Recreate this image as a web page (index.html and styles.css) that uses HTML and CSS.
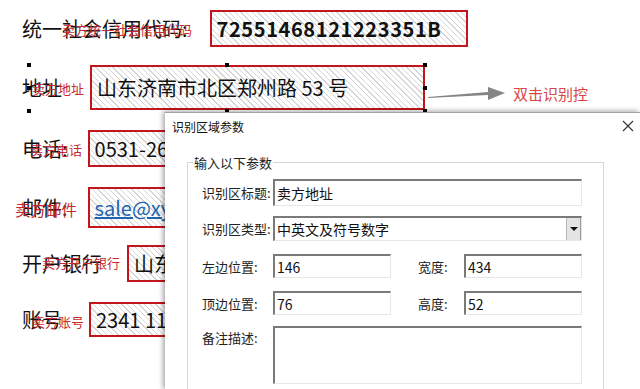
FILE: index.html
```html
<!DOCTYPE html>
<html lang="zh-CN">
<head>
    <meta charset="UTF-8">
    <meta name="viewport" content="width=device-width, initial-scale=1.0">
    <title>识别区域参数</title>
    <link rel="stylesheet" href="styles.css">
</head>
<body>
    <div class="sheet">
        <div class="row row-credit">
            <div class="field-name">统一社会信用代码:<span class="tag tag-credit">卖方统一社会信用代码</span></div>
            <div class="zone zone-credit"><span class="code">72551468121223351B</span></div>
        </div>
        <div class="row row-address">
            <div class="field-name">地址<span class="tag tag-address">卖方地址</span></div>
            <div class="zone zone-address">山东济南市北区郑州路 53 号</div>
        </div>
        <div class="row row-phone">
            <div class="field-name">电话:<span class="tag tag-phone">卖方电话</span></div>
            <div class="zone zone-phone">0531-26887654</div>
        </div>
        <div class="row row-mail">
            <div class="field-name">邮件:<span class="tag tag-mail">卖方邮件</span></div>
            <div class="zone zone-mail"><span class="mail-link">sale@xyz.com</span></div>
        </div>
        <div class="row row-bank">
            <div class="field-name">开户银行<span class="tag tag-bank">卖方开户银行</span></div>
            <div class="zone zone-bank">山东银行济南分行</div>
        </div>
        <div class="row row-account">
            <div class="field-name">账号<span class="tag tag-account">卖方账号</span></div>
            <div class="zone zone-account">2341 1122 3344</div>
        </div>
    </div>

    <!-- 选中框的控制点 -->
    <div class="selection">
        <span class="handle h-tl"></span>
        <span class="handle h-tm"></span>
        <span class="handle h-tr"></span>
        <span class="handle h-ml"></span>
        <span class="handle h-mr"></span>
        <span class="handle h-bl"></span>
        <span class="handle h-bm"></span>
        <span class="handle h-br"></span>
    </div>

    <div class="hint">
        <svg width="80" height="18" viewBox="0 0 80 18">
            <polygon points="0,12 60,7 60,2 77,8 60,15 60,10 0,13" fill="#858585"/>
        </svg>
        <span class="hint-text">双击识别控</span>
    </div>

    <div class="dialog">
        <div class="dialog-title">
            <span>识别区域参数</span>
            <svg class="close" width="12" height="12" viewBox="0 0 12 12">
                <path d="M1 1 L11 11 M11 1 L1 11" stroke="#333" stroke-width="1.1" fill="none"/>
            </svg>
        </div>
        <div class="dialog-body">
            <fieldset class="group">
                <legend>输入以下参数</legend>
                <div class="param-row row-title">
                    <label class="param-label">识别区标题:</label>
                    <input class="param-input input-wide" type="text" value="卖方地址" readonly>
                </div>
                <div class="param-row row-type">
                    <label class="param-label">识别区类型:</label>
                    <div class="combo">
                        <span class="combo-text">中英文及符号数字</span>
                        <span class="combo-btn"><span class="arrow-down"></span></span>
                    </div>
                </div>
                <div class="param-row row-pos">
                    <label class="param-label">左边位置:</label>
                    <input class="param-input input-half" type="text" value="146" readonly>
                    <label class="param-label label-short">宽度:</label>
                    <input class="param-input input-half" type="text" value="434" readonly>
                </div>
                <div class="param-row row-pos">
                    <label class="param-label">顶边位置:</label>
                    <input class="param-input input-half" type="text" value="76" readonly>
                    <label class="param-label label-short">高度:</label>
                    <input class="param-input input-half" type="text" value="52" readonly>
                </div>
                <div class="param-row row-note">
                    <label class="param-label">备注描述:</label>
                    <textarea class="param-input note" readonly></textarea>
                </div>
            </fieldset>
        </div>
    </div>
</body>
</html>
```

FILE: styles.css
```css
html {
    overflow: hidden;
}

body {
    margin: 0;
    width: 640px;
    height: 389px;
    overflow: hidden;
    position: relative;
    background-color: #fff;
    font-family: "Noto Sans CJK SC", "Liberation Sans", sans-serif;
    color: #111;
}

.sheet {
    display: flex;
    flex-direction: column;
    padding: 10px 0 0 22px;
}

.row {
    display: flex;
    align-items: center;
}

.row-address { margin-top: 18px; }
.row-phone { margin-top: 20px; }
.row-mail { margin-top: 20px; }
.row-bank { margin-top: 17px; }
.row-account { margin-top: 20px; }

.field-name {
    position: relative;
    font-size: 20px;
    line-height: 1;
    white-space: nowrap;
}

.tag {
    position: absolute;
    top: 50%;
    transform: translateY(-50%);
    font-size: 13px;
    color: #c62a2f;
    white-space: nowrap;
}

.tag-credit { left: 40px; }
.tag-address { left: 10px; }
.tag-phone { left: 8px; top: 50%; }
.tag-mail { left: -7px; top: 60%; font-size: 15.5px; }
.tag-bank { left: 20px; top: 42%; }
.tag-account { left: 10px; top: 57%; }

.zone {
    display: flex;
    align-items: center;
    box-sizing: border-box;
    padding-left: 5px;
    border: 2px solid #c3151c;
    background: repeating-linear-gradient(45deg, #fff 0, #fff 3px, #d6d6d6 3px, #d6d6d6 4px);
    font-size: 20px;
    white-space: nowrap;
    overflow: hidden;
}

.zone-credit { margin-left: 22px; width: 258px; height: 37px; }
.zone-address { margin-left: 28px; width: 335px; height: 45px; }
.zone-phone { margin-left: 20px; width: 300px; height: 37px; }
.zone-mail { margin-left: 20px; width: 300px; height: 41px; }
.zone-bank { margin-left: 25px; width: 300px; height: 37px; }
.zone-account { margin-left: 27px; width: 300px; height: 35px; }

.code {
    font-weight: bold;
    letter-spacing: 0.6px;
}

.mail-link {
    color: #1f64b0;
    text-decoration: underline;
}

.selection {
    position: absolute;
    left: 29px;
    top: 65px;
    width: 396px;
    height: 46px;
}

.handle {
    position: absolute;
    width: 4px;
    height: 4px;
    background-color: #000;
    margin: -2px 0 0 -2px;
}

.h-tl { left: 0; top: 0; }
.h-tm { left: 50%; top: 0; }
.h-tr { left: 100%; top: 0; }
.h-ml { left: 0; top: 50%; }
.h-mr { left: 100%; top: 50%; }
.h-bl { left: 0; top: 100%; }
.h-bm { left: 50%; top: 100%; }
.h-br { left: 100%; top: 100%; }

.hint {
    position: absolute;
    left: 428px;
    top: 83px;
    display: flex;
    align-items: center;
    gap: 5px;
}

.hint-text {
    font-size: 15px;
    color: #d64545;
}

.dialog {
    position: absolute;
    left: 165px;
    top: 112px;
    width: 475px;
    height: 277px;
    overflow: hidden;
    background-color: #fff;
    border-top: 1px solid #a3a3a3;
    box-shadow: -2px -1px 5px rgba(0, 0, 0, 0.35);
}

.dialog-title {
    display: flex;
    justify-content: space-between;
    align-items: center;
    height: 26px;
    padding: 0 6px 0 7px;
    font-size: 12px;
    color: #111;
}

.dialog-body {
    padding: 14px 36px 0 22px;
}

.group {
    margin: 0;
    padding: 0 21px 20px 14px;
    border: 1px solid #d6d6d6;
    height: 260px;
}

.group legend {
    font-size: 13px;
    padding: 0 1px;
    margin-left: -9px;
    color: #222;
}

.param-row {
    display: flex;
    align-items: center;
}

.row-title { margin-top: 7px; }
.row-type { margin-top: 10px; }
.row-pos { margin-top: 13px; }
.row-note { margin-top: 11px; align-items: flex-start; }

.param-label {
    width: 71px;
    font-size: 13px;
    color: #222;
    white-space: nowrap;
}

.label-short {
    width: 46px;
    margin-left: 27px;
}

.row-note .param-label {
    margin-top: 2px;
}

.param-input {
    box-sizing: border-box;
    margin: 0;
    padding: 0 2px;
    border-style: solid;
    border-width: 2px 1px 1px 2px;
    border-color: #7a7a7a #e6e6e6 #e6e6e6 #7a7a7a;
    font-family: "Noto Sans CJK SC", "Liberation Sans", sans-serif;
    font-size: 14px;
    color: #111;
    background-color: #fff;
    outline: none;
}

.input-wide {
    width: 309px;
    height: 27px;
}

.input-half {
    width: 118px;
    height: 24px;
}

.note {
    width: 309px;
    height: 58px;
    resize: none;
}

.combo {
    box-sizing: border-box;
    display: flex;
    align-items: center;
    width: 309px;
    height: 25px;
    border-style: solid;
    border-width: 2px 1px 1px 2px;
    border-color: #7a7a7a #e6e6e6 #e6e6e6 #7a7a7a;
}

.combo-text {
    flex: 1;
    padding-left: 2px;
    font-size: 14px;
}

.combo-btn {
    display: flex;
    align-items: center;
    justify-content: center;
    width: 15px;
    height: 100%;
    box-sizing: border-box;
    background-color: #e4e4e4;
    border-left: 1px solid #b9b9b9;
    border-right: 1px solid #9a9a9a;
}

.arrow-down {
    width: 0;
    height: 0;
    border-left: 4px solid transparent;
    border-right: 4px solid transparent;
    border-top: 4px solid #111;
}
```
